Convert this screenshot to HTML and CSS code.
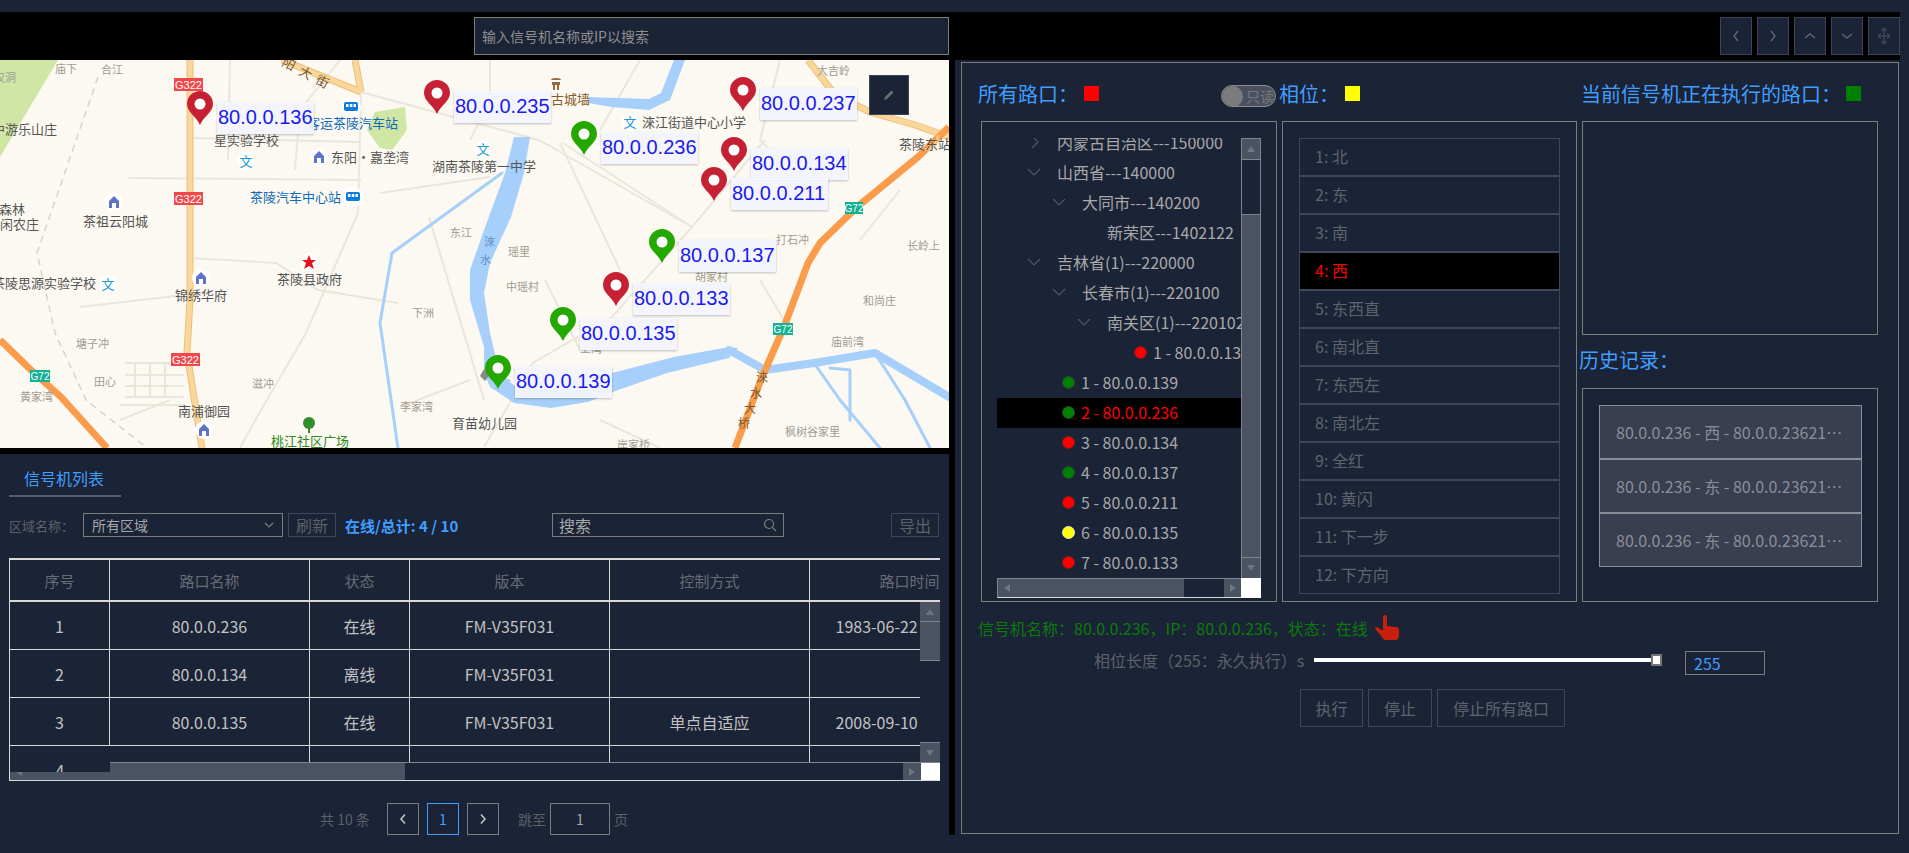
FILE: index.html
```html
<!DOCTYPE html>
<html lang="zh-CN">
<head>
<meta charset="utf-8">
<title>信号机</title>
<link rel="stylesheet" href="styles.css">
</head>
<body>
<div class="topbar"></div>
<div class="workspace">
  <section class="left">
    <div class="left-tools"><div class="search-ip">输入信号机名称或IP以搜索</div></div>
    <div class="map">
      <svg class="map-svg" viewBox="0 60 949 388" width="949" height="388" xmlns="http://www.w3.org/2000/svg">
        <defs>
          <path id="pinshape" d="M0 0C-4-9-13-13-13-21A13 13 0 0 1 13-21C13-13 4-9 0 0Z"/>
          <g id="pin-red"><use href="#pinshape" class="pin-r"/><circle cy="-21" r="5.5" class="pin-hole"/></g>
          <g id="pin-green"><use href="#pinshape" class="pin-g"/><circle cy="-21" r="5.5" class="pin-hole"/></g>
          <g id="lab"><path d="M17-11l-5 4 5 4Z" class="lab-tip"/><rect x="17" y="-23" width="97" height="32" class="lab-box"/></g>
          <g id="edu"><circle r="9" class="poi-bg"/><text y="5" class="poi-edu">文</text></g>
          <g id="home"><circle r="9" class="poi-bg"/><path d="M-5 6V-1L0-6l5 5V6H2V1H-2V6Z" class="poi-home"/></g>
          <g id="bus"><circle r="10" class="poi-bg"/><rect x="-7" y="-5" width="14" height="9" rx="2" class="poi-bus"/><path d="M-5-3h2.500v3H-5ZM-1.200-3h2.500v3h-2.500ZM2.500-3H5v3H2.500Z" class="poi-bg"/></g>
        </defs>
        <rect x="0" y="60" width="949" height="388" class="land"/>
        <path d="M0 60H58L0 157Z" class="park"/>
        <path d="M375 112L405 107 407 130 392 150 380 148 367 130Z" class="park"/>

        <g class="minor">
          <path d="M190 138L360 142"/><path d="M128 178L361 180"/>
          <path d="M361 92L358 213 306 333 257 417 240 448"/>
          <path d="M361 92L539 140 692 227"/><path d="M563 143L692 227"/>
          <path d="M692 227L765 140"/><path d="M692 227L612 317 533 363 484 447"/>
          <path d="M380 193L490 177"/><path d="M190 258L276 263 318 290 398 303"/>
          <path d="M80 307L184 295"/><path d="M429 217L484 400"/>
          <path d="M125 363H184M125 375H184M125 386H184M125 397H184M135 363V397M150 363V397M165 363V397"/>
          <path d="M340 60L300 110 295 170"/><path d="M230 60L228 160"/><path d="M490 60V100L470 140"/>
          <path d="M560 143L620 270"/><path d="M640 60L600 130"/><path d="M780 60L760 140 820 200"/>
          <path d="M760 280L790 330"/><path d="M900 190L860 240"/><path d="M120 405H185M120 420L170 400"/>
          <path d="M545 280L580 350"/><path d="M400 407L470 380"/><path d="M660 448L600 420"/>
        </g>
        <path d="M98 77L37 253 55 333 86 400 147 448" class="dash"/>

        <path d="M674 60H685L670 100 649 110 612 107 588 103V97L649 99 661 93Z" class="water"/>
        <path d="M514 137L505 173 484 230 470 270 470 300 484 347 484 373 490 387 514 403 551 408 588 402 618 390 667 373 729 358 738 348 729 347 674 357 612 373 520 385 500 375 490 333 484 293 490 263 511 217 524 173 530 137Z" class="water"/>
        <path d="M729 350L765 370 814 363 875 353 949 397" class="river r3"/>
        <path d="M502 173L392 253 380 323 398 448" class="river r4"/>
        <path d="M814 363L840 400 880 448" class="river r4"/>
        <path d="M875 353L905 400 930 448" class="river r4"/>
        <path d="M830 368L850 370 850 420" class="river r4"/>

        <path d="M190 60V300L187 353 202 448" class="road-o"/><path d="M190 60V300L187 353 202 448" class="road-i"/>
        <path d="M282 60L361 92M355 60L361 92" class="road-o"/><path d="M282 60L361 92M355 60L361 92" class="road-i"/>
        <path d="M808 60L835 95 870 112 915 125 949 137" class="road-o"/><path d="M808 60L835 95 870 112 915 125 949 137" class="road-i"/>
        <path d="M735 448L762 377 784 327 808 263 820 243 857 207 918 157 949 127" class="hw"/>
        <path d="M0 340L31 370 61 397 107 448" class="hw"/>
        <path d="M925 150q13-3 13-15" class="road-i2"/>

        <g class="shield-r">
          <rect x="174" y="78" width="29" height="13"/><rect x="174" y="192" width="29" height="13"/><rect x="171" y="353" width="29" height="13"/>
        </g>
        <g class="shield-t">
          <rect x="845" y="202" width="18" height="12"/><rect x="773" y="323" width="20" height="12"/><rect x="30" y="370" width="20" height="12"/>
        </g>
        <text x="188.500" y="89" class="shield-txt">G322</text><text x="188.500" y="203" class="shield-txt">G322</text><text x="185.500" y="364" class="shield-txt">G322</text>
        <text x="854" y="212" class="shield-txt sm">G72</text><text x="783" y="333" class="shield-txt sm">G72</text><text x="40" y="380" class="shield-txt sm">G72</text>

        <use href="#edu" x="246" y="161"/><use href="#edu" x="483" y="149"/><use href="#edu" x="630" y="122"/><use href="#edu" x="108" y="284"/>
        <use href="#home" x="319" y="157"/><use href="#home" x="114" y="202"/><use href="#home" x="201" y="278"/><use href="#home" x="204" y="430"/>
        <use href="#bus" x="351" y="107"/><use href="#bus" x="353" y="197"/>
        <circle cx="309" cy="262" r="9" class="poi-bg"/><path d="M309 255l2 5h5l-4 3 2 6-5-3-5 3 2-6-4-3h5Z" class="poi-star"/>
        <path d="M556 78q-5 0-5 2h10q0-2-5-2ZM552 82h8v3h-8ZM553 85h2v5h-2ZM557 85h2v5h-2Z" class="poi-tower"/>
        <circle cx="309" cy="423" r="6" class="poi-tree"/><rect x="308" y="427" width="2" height="6" class="poi-tree"/>
        <path d="M484 369l6 5-5 7-5-5Z" class="poi-school"/>

        <g class="t-poi">
          <text x="214" y="145">星实验学校</text><text x="331" y="162">东阳·嘉垄湾</text><text x="83" y="226">茶祖云阳城</text>
          <text x="277" y="284">茶陵县政府</text><text x="175" y="300">锦绣华府</text><text x="178" y="416">南浦御园</text>
          <text x="452" y="428">育苗幼儿园</text><text x="432" y="171">湖南茶陵第一中学</text><text x="642" y="127">淶江街道中心小学</text>
          <text x="899" y="149">茶陵东站</text><text x="-8" y="288">茶陵思源实验学校</text><text x="-8" y="134">中游乐山庄</text>
          <text x="-1" y="214">森林</text><text x="-13" y="229">休闲农庄</text>
        </g>
        <g class="t-blue"><text x="250" y="202">茶陵汽车中心站</text><text x="307" y="128">客运茶陵汽车站</text></g>
        <text x="551" y="104" class="t-brown">古城墙</text>
        <text x="271" y="446" class="t-green">桃江社区广场</text>
        <g class="t-small">
          <text x="55" y="73">庙下</text><text x="101" y="74">合江</text><text x="-6" y="82">汉洞</text><text x="817" y="75">大吉岭</text>
          <text x="776" y="244">打石冲</text><text x="907" y="250">长岭上</text><text x="863" y="305">和尚庄</text><text x="831" y="346">庙前湾</text>
          <text x="785" y="436">枫树谷家里</text><text x="695" y="281">胡家村</text><text x="450" y="237">东江</text><text x="508" y="256">瑶里</text>
          <text x="506" y="291">中瑶村</text><text x="412" y="317">下洲</text><text x="252" y="388">滋冲</text><text x="580" y="353">上湾</text>
          <text x="76" y="348">塘子冲</text><text x="94" y="386">田心</text><text x="20" y="401">黄家湾</text><text x="400" y="411">李家湾</text>
          <text x="617" y="449">岸家桥</text>
        </g>
        <text x="281" y="65" class="t-road" transform="rotate(28 281 65)">阳大街</text>
        <text x="484" y="246" class="t-riv">淶</text><text x="480" y="264" class="t-riv">水</text>
        <text x="756" y="382" class="t-bridge">淶</text><text x="750" y="398" class="t-bridge">水</text><text x="744" y="413" class="t-bridge">大</text><text x="738" y="428" class="t-bridge">桥</text>

        <g transform="translate(200 125)"><use href="#pin-red"/><use href="#lab"/><text x="18" y="-1" class="lab-txt">80.0.0.136</text></g>
        <g transform="translate(437 114)"><use href="#pin-red"/><use href="#lab"/><text x="18" y="-1" class="lab-txt">80.0.0.235</text></g>
        <g transform="translate(743 111)"><use href="#pin-red"/><use href="#lab"/><text x="18" y="-1" class="lab-txt">80.0.0.237</text></g>
        <g transform="translate(584 155)"><use href="#pin-green"/><use href="#lab"/><text x="18" y="-1" class="lab-txt">80.0.0.236</text></g>
        <g transform="translate(734 171)"><use href="#pin-red"/><use href="#lab"/><text x="18" y="-1" class="lab-txt">80.0.0.134</text></g>
        <g transform="translate(714 201)"><use href="#pin-red"/><use href="#lab"/><text x="18" y="-1" class="lab-txt">80.0.0.211</text></g>
        <g transform="translate(662 263)"><use href="#pin-green"/><use href="#lab"/><text x="18" y="-1" class="lab-txt">80.0.0.137</text></g>
        <g transform="translate(616 306)"><use href="#pin-red"/><use href="#lab"/><text x="18" y="-1" class="lab-txt">80.0.0.133</text></g>
        <g transform="translate(563 341)"><use href="#pin-green"/><use href="#lab"/><text x="18" y="-1" class="lab-txt">80.0.0.135</text></g>
        <g transform="translate(498 389)"><use href="#pin-green"/><use href="#lab"/><text x="18" y="-1" class="lab-txt">80.0.0.139</text></g>
      </svg>
      <button class="map-edit" aria-label="编辑">
        <svg width="12" height="12" viewBox="0 0 12 12"><path d="M1 11L2 8 8.500 1.500 10.500 3.500 4 10Z" class="edit-ico"/></svg>
      </button>
    </div>
    <div class="gap-black"></div>
    <div class="list-panel">
      <div class="tab">信号机列表</div>
      <div class="list-tools">
        <span class="area-label">区域名称：</span>
        <div class="select">所有区域
          <svg width="10" height="6" viewBox="0 0 10 6"><path d="M1 1L5 5 9 1" class="chev"/></svg>
        </div>
        <button class="btn btn-refresh">刷新</button>
        <span class="online">在线/总计: 4 / 10</span>
        <div class="searchbox">搜索
          <svg width="14" height="14" viewBox="0 0 14 14"><circle cx="6" cy="6" r="4.500" class="chev"/><path d="M9.500 9.500L13 13" class="chev"/></svg>
        </div>
        <button class="btn btn-export">导出</button>
      </div>
      <div class="grid-wrap">
        <div class="grid-head">
          <table class="grid">
            <colgroup><col class="c1"><col class="c2"><col class="c3"><col class="c2"><col class="c2"><col class="c6"></colgroup>
            <tr class="head-row"><th>序号</th><th>路口名称</th><th>状态</th><th>版本</th><th>控制方式</th><th>路口时间</th></tr>
          </table>
        </div>
        <div class="grid-mid">
          <div class="grid-body">
            <table class="grid">
              <colgroup><col class="c1"><col class="c2"><col class="c3"><col class="c2"><col class="c2"><col class="c6"></colgroup>
              <tr><td>1</td><td>80.0.0.236</td><td>在线</td><td>FM-V35F031</td><td></td><td>1983-06-22 10:26:41</td></tr>
              <tr><td>2</td><td>80.0.0.134</td><td>离线</td><td>FM-V35F031</td><td></td><td></td></tr>
              <tr><td>3</td><td>80.0.0.135</td><td>在线</td><td>FM-V35F031</td><td>单点自适应</td><td>2008-09-10 08:12:30</td></tr>
              <tr><td></td><td></td><td></td><td></td><td></td><td></td></tr>
            </table>
          </div>
          <div class="vbar vbar-table">
            <div class="sb-btn"><i class="tri-up"></i></div>
            <div class="sb-thumb"></div>
            <div class="sb-track"></div>
            <div class="sb-btn"><i class="tri-down"></i></div>
          </div>
        </div>
        <div class="hbar hbar-table">
          <div class="sb-btn h"><i class="tri-left"></i></div>
          <div class="sb-thumb"></div>
          <div class="sb-track"></div>
          <div class="sb-btn h"><i class="tri-right"></i></div>
          <div class="corner"></div>
        </div>
        <div class="fixed-cell">4</div>
      </div>
      <div class="pager">
        <span class="pg-total">共 10 条</span>
        <button class="pg"><svg width="8" height="12" viewBox="0 0 8 12"><path d="M6 1.500L2 6 6 10.500" class="pg-chev"/></svg></button>
        <button class="pg pg-on">1</button>
        <button class="pg"><svg width="8" height="12" viewBox="0 0 8 12"><path d="M2 1.500L6 6 2 10.500" class="pg-chev"/></svg></button>
        <span class="pg-jump">跳至</span>
        <div class="pg-input">1</div>
        <span class="pg-unit">页</span>
      </div>
    </div>
  </section>

  <section class="right">
    <div class="right-tools">
      <button class="tool"><svg width="10" height="14" viewBox="0 0 10 14"><path d="M7 2L3 7 7 12" class="tool-ico"/></svg></button>
      <button class="tool"><svg width="10" height="14" viewBox="0 0 10 14"><path d="M3 2L7 7 3 12" class="tool-ico"/></svg></button>
      <button class="tool"><svg width="14" height="10" viewBox="0 0 14 10"><path d="M2 7L7 3 12 7" class="tool-ico"/></svg></button>
      <button class="tool"><svg width="14" height="10" viewBox="0 0 14 10"><path d="M2 3L7 7 12 3" class="tool-ico"/></svg></button>
      <button class="tool"><svg width="16" height="18" viewBox="0 0 16 18"><path d="M8 1V17M2 9H14M8 1L5.500 4M8 1L10.500 4M8 17L5.500 14M8 17L10.500 14M2 9L5 6.500M2 9L5 11.500M14 9L11 6.500M14 9L11 11.500" class="tool-ico dim"/></svg></button>
    </div>
    <div class="control">
      <div class="ctl-head">
        <div class="h-all"><span class="h-title">所有路口：</span><i class="sq sq-r"></i></div>
        <div class="toggle"><i class="knob"></i><span>只读</span></div>
        <div class="h-phase"><span class="h-title">相位：</span><i class="sq sq-y"></i></div>
        <div class="h-cur"><span class="h-title">当前信号机正在执行的路口：</span><i class="sq sq-g"></i></div>
      </div>
      <div class="ctl-cols">
        <div class="box tree-box">
          <div class="tree-frame">
            <div class="tree-main">
              <div class="tree">
                <div class="node n1"><svg class="tw" width="10" height="16" viewBox="0 0 10 16"><path d="M2 2L8 8 2 14" class="tw-p"/></svg>内蒙古自治区---150000</div>
                <div class="node n1"><svg class="tw" width="14" height="10" viewBox="0 0 14 10"><path d="M1 2L7 8 13 2" class="tw-p"/></svg>山西省---140000</div>
                <div class="node n2"><svg class="tw" width="14" height="10" viewBox="0 0 14 10"><path d="M1 2L7 8 13 2" class="tw-p"/></svg>大同市---140200</div>
                <div class="node n3"><span class="tw"></span>新荣区---1402122</div>
                <div class="node n1"><svg class="tw" width="14" height="10" viewBox="0 0 14 10"><path d="M1 2L7 8 13 2" class="tw-p"/></svg>吉林省(1)---220000</div>
                <div class="node n2"><svg class="tw" width="14" height="10" viewBox="0 0 14 10"><path d="M1 2L7 8 13 2" class="tw-p"/></svg>长春市(1)---220100</div>
                <div class="node n3"><svg class="tw" width="14" height="10" viewBox="0 0 14 10"><path d="M1 2L7 8 13 2" class="tw-p"/></svg>南关区(1)---220102</div>
                <div class="node leaf deep"><i class="dot red"></i>1 - 80.0.0.138</div>
                <div class="node leaf"><i class="dot green"></i>1 - 80.0.0.139</div>
                <div class="node leaf sel"><i class="dot green"></i>2 - 80.0.0.236</div>
                <div class="node leaf"><i class="dot red"></i>3 - 80.0.0.134</div>
                <div class="node leaf"><i class="dot green"></i>4 - 80.0.0.137</div>
                <div class="node leaf"><i class="dot red"></i>5 - 80.0.0.211</div>
                <div class="node leaf"><i class="dot yellow"></i>6 - 80.0.0.135</div>
                <div class="node leaf"><i class="dot red"></i>7 - 80.0.0.133</div>
              </div>
              <div class="hbar hbar-tree">
                <div class="sb-btn h"><i class="tri-left"></i></div>
                <div class="sb-thumb"></div>
                <div class="sb-track"></div>
                <div class="sb-btn h"><i class="tri-right"></i></div>
              </div>
            </div>
            <div class="tree-side">
              <div class="vbar vbar-tree">
                <div class="sb-btn"><i class="tri-up"></i></div>
                <div class="sb-track"></div>
                <div class="sb-thumb"></div>
                <div class="sb-btn"><i class="tri-down"></i></div>
              </div>
              <div class="corner"></div>
            </div>
          </div>
        </div>
        <div class="box phase-box">
          <div class="phase">1: 北</div><div class="phase">2: 东</div><div class="phase">3: 南</div>
          <div class="phase phase-on">4: 西</div><div class="phase">5: 东西直</div><div class="phase">6: 南北直</div>
          <div class="phase">7: 东西左</div><div class="phase">8: 南北左</div><div class="phase">9: 全红</div>
          <div class="phase">10: 黄闪</div><div class="phase">11: 下一步</div><div class="phase">12: 下方向</div>
        </div>
        <div class="col3">
          <div class="box cur-box"></div>
          <div class="h-title hist-title">历史记录：</div>
          <div class="box hist-box">
            <div class="hist">80.0.0.236 - 西 - 80.0.0.23621000000</div>
            <div class="hist">80.0.0.236 - 东 - 80.0.0.23621000000</div>
            <div class="hist">80.0.0.236 - 东 - 80.0.0.23621000000</div>
          </div>
        </div>
      </div>
      <div class="status"><span>信号机名称：80.0.0.236，IP：80.0.0.236，状态：在线</span><svg class="hand" width="25" height="25" viewBox="0 0 25 25"><path d="M8 2Q8 0 10 0 12 0 12 2V11L21 12Q24 12 24 15V20Q24 25 20 25H10Q8 25 7 22L1 15Q-1 12 1 12 3 12 5 14L8 16Z" class="hand-p"/></svg></div>
      <div class="len-row">
        <span class="len-label">相位长度（255：永久执行）s</span>
        <div class="slider"><i class="thumb"></i></div>
        <div class="len-input">255</div>
      </div>
      <div class="actions">
        <button class="act a1">执行</button><button class="act a2">停止</button><button class="act a3">停止所有路口</button>
      </div>
    </div>
  </section>
</div>
</body>
</html>
```

FILE: styles.css
```css
* { box-sizing: border-box; }
html, body { margin: 0; padding: 0; }
body {
  width: 1909px; height: 853px; overflow: hidden;
  background: #1b2337; color: #a8a8a8;
  font-family: "Noto Sans CJK SC", "Noto Sans", sans-serif; font-size: 16px;
}
button { font-family: inherit; background: none; padding: 0; margin: 0; cursor: default; }
.topbar { height: 12px; }
.workspace { display: flex; align-items: flex-start; }

/* left column */
.left { width: 955px; height: 823px; background: #000; }
.left-tools { height: 48px; padding: 5px 0 0 474px; }
.search-ip {
  width: 475px; height: 38px; padding-left: 7px;
  background: #1b2337; border: 1px solid #7c7c7c;
  font-size: 14px; line-height: 36px; color: #8f8f8f;
}
.map { position: relative; width: 949px; height: 388px; overflow: hidden; }
.map-svg { display: block; }
.map-edit {
  position: absolute; left: 869px; top: 15px; width: 40px; height: 40px;
  background: #1b2337; border: 1px solid #3c4458;
  display: flex; align-items: center; justify-content: center;
}
.edit-ico { fill: #6b6b6b; }
.gap-black { height: 6px; }

.land { fill: #fcf9f2; }
.park { fill: #cfe6a4; }
.minor path { fill: none; stroke: #ebe6dc; stroke-width: 2; }
.dash { fill: none; stroke: #d9d4ca; stroke-width: 1.500; stroke-dasharray: 7 5; }
.water { fill: #a6cffb; }
.river { fill: none; stroke: #a6cffb; stroke-linejoin: round; stroke-linecap: round; }
.r3 { stroke-width: 8; }
.r4 { stroke-width: 3; }
.road-o { fill: none; stroke: #ecc07a; stroke-width: 7; }
.road-i { fill: none; stroke: #f9d79a; stroke-width: 5; }
.road-i2 { fill: none; stroke: #f5c77e; stroke-width: 3; }
.hw { fill: none; stroke: #fa9c4c; stroke-width: 7; stroke-linejoin: round; }
.shield-r rect { fill: #f2474b; }
.shield-t rect { fill: #13b295; }
.shield-txt { font: 11px "Liberation Sans", sans-serif; fill: #fff; text-anchor: middle; }
.shield-txt.sm { font-size: 10px; }
.poi-bg { fill: #fff; }
.poi-edu { font-size: 13px; fill: #1c9ad6; text-anchor: middle; }
.poi-home { fill: #5d74c9; }
.poi-bus { fill: #0c7be0; }
.poi-star { fill: #e3121c; }
.poi-tower { fill: #9b6a3a; }
.poi-tree { fill: #2f8f2f; }
.poi-school { fill: #888; }
.t-poi text { font-size: 13px; fill: #555; }
.t-blue text { font-size: 13px; fill: #1269b8; }
.t-brown { font-size: 13px; fill: #8a5a22; }
.t-green { font-size: 13px; fill: #2f8a20; }
.t-small text { font-size: 11px; fill: #a09c94; }
.t-road { font-size: 13px; letter-spacing: 6px; fill: #7a5a30; }
.t-riv { font-size: 11px; fill: #5d8fc9; }
.t-bridge { font-size: 12px; fill: #7a5a30; }
.pin-r { fill: #c52033; }
.pin-g { fill: #24a800; }
.pin-hole { fill: #fff; }
.lab-box { fill: rgba(247, 248, 255, .94); filter: drop-shadow(0 1px 1px rgba(0, 0, 0, .25)); }
.lab-tip { fill: #fff; }
.lab-txt { font: 20px "Liberation Sans", Arial, sans-serif; fill: #1a1aee; }

/* list panel */
.list-panel { width: 949px; height: 381px; background: #1b2337; padding-left: 9px; }
.tab {
  width: 112px; height: 43px; padding: 13px 0 0 15px;
  border-bottom: 2px solid #555c6a;
  font-size: 16px; line-height: 22px; color: #409eff;
}
.list-tools { display: flex; align-items: center; height: 24px; margin-top: 16px; font-size: 14px; }
.area-label { width: 74px; color: #5d6068; font-size: 13px; white-space: nowrap; }
.select, .searchbox {
  display: flex; align-items: center; justify-content: space-between;
  height: 24px; border: 1px solid #7c7c7c; padding: 0 8px;
  color: #a8a8a8;
}
.select { width: 200px; font-size: 14px; }
.searchbox { width: 232px; margin-left: 95px; font-size: 16px; padding: 0 6px; }
.chev { fill: none; stroke: #7c7c7c; stroke-width: 1.200; }
.btn { height: 24px; border: 1px solid #3f4658; color: #5d6068; font-size: 16px; line-height: 20px; }
.btn-refresh { width: 48px; margin-left: 5px; }
.online { width: 112px; margin-left: 9px; color: #409eff; font-size: 15px; font-weight: 700; white-space: nowrap; }
.btn-export { width: 48px; margin-left: 107px; }

.grid-wrap { position: relative; width: 931px; height: 223px; margin-top: 21px; overflow: hidden; }
.grid-head { width: 931px; height: 44px; overflow: hidden; border-top: 2px solid #d9d9d9; border-bottom: 2px solid #d9d9d9; }
.grid { border-collapse: separate; border-spacing: 0; table-layout: fixed; width: 1001px; }
.c1 { width: 101px; } .c2 { width: 200px; } .c3 { width: 100px; } .c6 { width: 200px; }
.grid th, .grid td {
  border-right: 1px solid #d9d9d9; text-align: center; white-space: nowrap; overflow: hidden; padding: 0;
}
.grid th:first-child, .grid td:first-child { border-left: 1px solid #d9d9d9; }
.grid th { height: 40px; font-weight: 400; font-size: 15px; color: #686c76; }
.grid td { height: 48px; border-bottom: 1px solid #d9d9d9; color: #c2c2c2; }
.grid-mid { display: flex; height: 160px; }
.grid-body { width: 911px; height: 160px; overflow: hidden; }
.fixed-cell {
  position: absolute; left: 0; top: 188px; width: 101px; height: 26px; overflow: hidden;
  background: #1b2337; border-left: 1px solid #d9d9d9;
  text-align: center; line-height: 48px; color: #c2c2c2;
}

.vbar { display: flex; flex-direction: column; width: 20px; background: #1b2337; }
.hbar { display: flex; background: #1b2337; border-top: 1px solid #7e8490; border-bottom: 1px solid #d9d9d9; border-left: 1px solid #d9d9d9; }
.sb-btn { flex: none; height: 20px; background: #4b5261; display: flex; align-items: center; justify-content: center; }
.sb-btn.h { width: 18px; height: auto; }
.sb-thumb { flex: none; background: #4b5261; }
.sb-track { flex: none; background: #1b2337; }
.vbar-table { height: 160px; }
.vbar-table .sb-btn:first-child { border-bottom: 1px solid #7e8490; }
.vbar-table .sb-btn:last-child { border-top: 1px solid #7e8490; }
.vbar-table .sb-thumb { height: 39px; border-bottom: 1px solid #7e8490; }
.vbar-table .sb-track { height: 81px; }
.hbar-table { height: 19px; }
.hbar-table .sb-thumb { width: 377px; }
.hbar-table .sb-track { width: 498px; }
.hbar-table .corner { width: 20px; }
.corner { background: #fff; }
.tri-up, .tri-down, .tri-left, .tri-right { display: block; width: 0; height: 0; border: 4px solid transparent; }
.tri-up { border-bottom: 6px solid #6e7482; border-top-width: 0; }
.tri-down { border-top: 6px solid #6e7482; border-bottom-width: 0; }
.tri-left { border-right: 6px solid #6e7482; border-left-width: 0; }
.tri-right { border-left: 6px solid #6e7482; border-right-width: 0; }

.pager { display: flex; align-items: center; height: 32px; margin-top: 22px; padding-left: 311px; color: #5d6068; font-size: 14px; }
.pg-total { width: 67px; white-space: nowrap; }
.pg { width: 32px; height: 32px; margin-right: 8px; border: 1px solid #7c7c7c; color: #409eff; font-size: 14px; display: flex; align-items: center; justify-content: center; }
.pg-on { border-color: #409eff; }
.pg-chev { fill: none; stroke: #c8c8c8; stroke-width: 1.500; }
.pg-jump { width: 32px; margin-left: 11px; }
.pg-input { width: 60px; height: 32px; border: 1px solid #7c7c7c; text-align: center; line-height: 30px; color: #a8a8a8; }
.pg-unit { margin-left: 4px; }

/* right column */
.right { width: 945px; }
.right-tools { display: flex; justify-content: flex-end; gap: 5px; height: 48px; padding-top: 5px; background: #000; margin-right: 0; }
.tool { width: 32px; height: 38px; background: #1b2337; border: 1px solid #3c4458; display: flex; align-items: center; justify-content: center; }
.tool-ico { fill: none; stroke: #5f6674; stroke-width: 1.400; }
.tool-ico.dim { stroke: #3f4658; }

.control { width: 938px; height: 772px; margin: 2px 0 0 6px; border: 1px solid #7c7c7c; padding: 22px 0 0 16px; }
.ctl-head { display: flex; align-items: center; height: 22px; }
.h-title { font-size: 20px; line-height: 22px; color: #409eff; white-space: nowrap; }
.sq { display: block; width: 15px; height: 15px; }
.sq-r { background: #f00; margin-left: 6px; }
.sq-y { background: #ff0; margin-left: 6px; }
.sq-g { background: #008000; margin-left: 5px; }
.h-all, .h-phase, .h-cur { display: flex; align-items: center; margin-top: -5px; }
.h-all { width: 243px; }
.h-phase { width: 302px; }
.toggle {
  width: 55px; height: 22px; margin-right: 3px; border: 1px solid #8a8a8a; border-radius: 11px;
  background: #4b5060; display: flex; align-items: center;
  font-size: 14px; color: #777; line-height: 20px; overflow: hidden;
}
.knob { flex: none; width: 21px; height: 21px; border-radius: 50%; background: #7b7b7b; margin-right: 3px; }
.toggle span { white-space: nowrap; }

.ctl-cols { display: flex; gap: 5px; margin: 14px 0 0 3px; height: 481px; }
.box { border: 1px solid #7c7c7c; }
.tree-box { width: 296px; height: 481px; padding: 16px 0 0 15px; }
.tree-frame { display: flex; width: 264px; height: 460px; }
.tree-main { width: 244px; display: flex; flex-direction: column; }
.tree { height: 440px; overflow: hidden; }
.node { display: flex; align-items: center; height: 30px; padding-bottom: 2px; white-space: nowrap; color: #a8a8a8; }
.node:first-child { margin-top: -10px; }
.tw { flex: none; margin-right: 16px; }
span.tw { width: 14px; }
.tw-p { fill: none; stroke: #4f5666; stroke-width: 1.200; }
.n1 { padding-left: 30px; } .n2 { padding-left: 55px; } .n3 { padding-left: 80px; }
.n1 svg[width="10"] { margin-left: 3px; margin-right: 17px; }
.leaf { padding-left: 65px; }
.leaf.deep { padding-left: 137px; }
.sel { background: #000; color: #f00; }
.dot { flex: none; width: 13px; height: 13px; border-radius: 50%; margin-right: 6px; border: 1px solid #2a3a2a; }
.dot.red { background: #f00; border-color: #8a1a1a; }
.dot.green { background: #008000; border-color: #2a4a2a; }
.dot.yellow { background: #ff0; border-color: #e8e8c0; }
.hbar-tree { height: 20px; flex: none; border-left: 1px solid #7e8490; }
.hbar-tree .sb-btn { width: 17px; }
.hbar-tree .sb-thumb { width: 169px; }
.hbar-tree .sb-track { width: 40px; }
.tree-side { width: 20px; display: flex; flex-direction: column; }
.vbar-tree { height: 440px; border-left: 1px solid #7e8490; border-right: 1px solid #7e8490; border-top: 1px solid #7e8490; width: 20px; }
.vbar-tree .sb-track { height: 55px; border-top: 1px solid #7e8490; }
.vbar-tree .sb-thumb { height: 344px; border-top: 1px solid #7e8490; border-bottom: 1px solid #7e8490; }
.tree-side .corner { height: 20px; }

.phase-box { width: 295px; height: 481px; padding: 16px 0 0 16px; }
.phase {
  width: 261px; height: 38px; padding-left: 15px; border: 1px solid #3f4658;
  line-height: 34px; color: #5f636d; font-size: 16px;
}
.phase-on { background: #000; color: #f00; }

.col3 { width: 296px; }
.cur-box { height: 214px; }
.hist-title { height: 53px; line-height: 49px; margin-left: -3px; }
.hist-box { height: 214px; padding: 16px 0 0 16px; }
.hist {
  width: 263px; height: 54px; padding: 0 16px; background: #393e50; border: 1px solid #8a8e98;
  line-height: 52px; color: #8a8e98; font-size: 16px; white-space: nowrap; overflow: hidden; text-overflow: ellipsis;
}
.status { display: flex; align-items: center; height: 25px; margin-top: 13px; color: #0b7a0b; font-size: 16px; white-space: nowrap; }
.hand { margin-left: 7px; flex: none; }
.hand-p { fill: #c8200e; }
.len-row { display: flex; align-items: center; height: 24px; margin-top: 11px; padding-left: 116px; }
.len-label { width: 220px; margin-top: -6px; color: #5d6068; font-size: 16px; white-space: nowrap; }
.slider { position: relative; width: 348px; height: 4px; background: #fff; margin-top: -6px; }
.thumb { position: absolute; right: 0; top: -4px; width: 11px; height: 12px; background: #fff; border: 2px solid #777; }
.len-input { width: 80px; height: 24px; margin-left: 23px; border: 1px solid #7c7c7c; padding-left: 8px; color: #409eff; line-height: 22px; font-size: 16px; }
.actions { display: flex; gap: 5px; margin: 14px 0 0 322px; }
.act { height: 38px; border: 1px solid #3f4658; color: #5f636d; font-size: 16px; }
.a1 { width: 63px; } .a2 { width: 64px; } .a3 { width: 128px; }
```
